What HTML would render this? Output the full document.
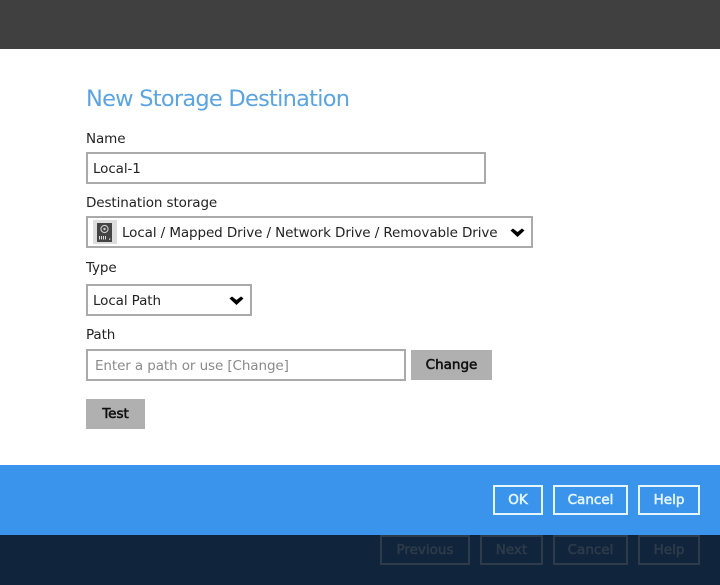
<!DOCTYPE html>
<html>
<head>
<meta charset="utf-8">
<style>
html,body{margin:0;padding:0;background:#fff}
#p{position:relative;width:720px;height:585px;overflow:hidden;background:#fff;font-family:"DejaVu Sans","Liberation Sans",sans-serif;font-size:13.5px;color:#222}
#p div{position:absolute;box-sizing:border-box}
.t{white-space:nowrap;line-height:20px;height:20px;letter-spacing:-.1px}
.box{border:2px solid #aaa;background:#fff}
.btn{background:#b0b0b0;color:#111;text-align:center;line-height:31px;height:30px;font-size:13.5px;-webkit-text-stroke:.55px #111}
.w{border:2px solid #e4f6fd;color:#e4f6fd;text-align:center;line-height:27px;height:30px;font-size:13.5px;-webkit-text-stroke:.55px #e4f6fd}
.d{border:2px solid #2d3b4a;color:#2d3b4a;text-align:center;line-height:27px;height:30px;font-size:13.5px;-webkit-text-stroke:.55px #2d3b4a}
</style>
</head>
<body>
<div id="p">
<div style="left:0;top:0;width:720px;height:49px;background:#404040"></div>
<div style="left:0;top:465px;width:720px;height:70px;background:#3a94ec"></div>
<div style="left:0;top:535px;width:720px;height:50px;background:#10243b"></div>

<div class="t" style="left:86px;top:84px;height:30px;line-height:30px;font-size:22.5px;color:#5ba4df;letter-spacing:-.75px">New Storage Destination</div>

<div class="t" style="left:86px;top:129px">Name</div>
<div class="box" style="left:86px;top:152px;width:400px;height:32px"></div>
<div class="t" style="left:93px;top:159px">Local-1</div>

<div class="t" style="left:86px;top:193px">Destination storage</div>
<div class="box" style="left:86px;top:216px;width:447px;height:32px"></div>
<div style="left:93px;top:220px;width:24px;height:24px;background:#ddd"></div>
<svg style="position:absolute;left:93px;top:220px" width="24" height="24" viewBox="0 0 24 24">
<rect x="4" y="3" width="15" height="19" fill="#444"/>
<circle cx="11.5" cy="9" r="3.6" fill="none" stroke="#ccc" stroke-width="1.1"/>
<circle cx="11.5" cy="9" r="1.2" fill="#ccc"/>
<path d="M6.5 16v3.5M8.5 16v3.5M10.5 16v3.5M12.5 16v3.5" stroke="#ddd" stroke-width="1"/>
<rect x="16" y="18.5" width="1.3" height="1.3" fill="#ddd"/>
</svg>
<div class="t" style="left:122px;top:223px">Local / Mapped Drive / Network Drive / Removable Drive</div>
<svg style="position:absolute;left:510px;top:228px" width="15" height="10" viewBox="0 0 15 10"><path d="M0.5 2.5 L3 0.5 L7.5 4 L12 0.5 L14.5 2.5 L7.5 9 Z" fill="#000"/></svg>

<div class="t" style="left:86px;top:258px">Type</div>
<div class="box" style="left:86px;top:284px;width:166px;height:32px"></div>
<div class="t" style="left:93px;top:291px">Local Path</div>
<svg style="position:absolute;left:229px;top:296px" width="15" height="10" viewBox="0 0 15 10"><path d="M0.5 2.5 L3 0.5 L7.5 4 L12 0.5 L14.5 2.5 L7.5 9 Z" fill="#000"/></svg>

<div class="t" style="left:86px;top:325px">Path</div>
<div class="box" style="left:86px;top:349px;width:320px;height:32px"></div>
<div class="t" style="left:95px;top:356px;color:#8a8a8a">Enter a path or use [Change]</div>
<div class="btn" style="left:411px;top:350px;width:81px">Change</div>
<div class="btn" style="left:86px;top:399px;width:59px">Test</div>

<div class="w" style="left:493px;top:485px;width:50px">OK</div>
<div class="w" style="left:553px;top:485px;width:75px">Cancel</div>
<div class="w" style="left:638px;top:485px;width:62px">Help</div>

<div class="d" style="left:380px;top:535px;width:90px">Previous</div>
<div class="d" style="left:480px;top:535px;width:63px">Next</div>
<div class="d" style="left:553px;top:535px;width:75px">Cancel</div>
<div class="d" style="left:638px;top:535px;width:62px">Help</div>
</div>
</body>
</html>
